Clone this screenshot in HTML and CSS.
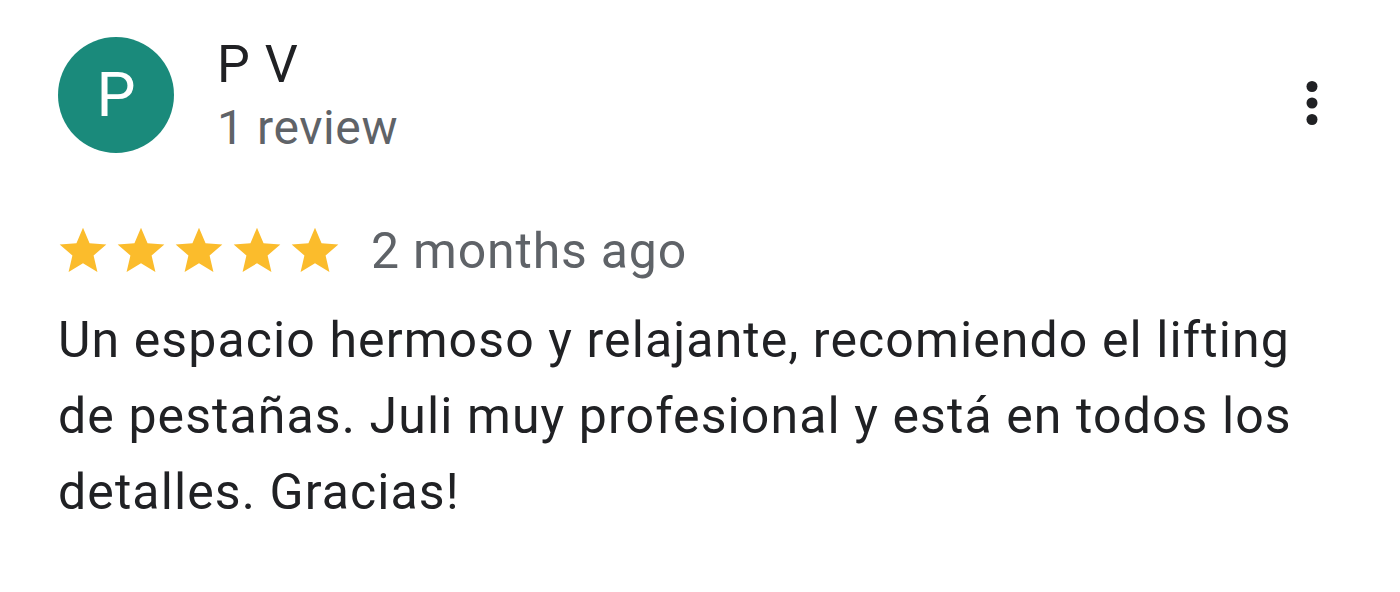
FILE: index.html
```html
<!DOCTYPE html>
<html lang="es">
<head>
<meta charset="utf-8">
<link rel="stylesheet" href="styles.css">
</head>
<body>
<div class="review">
  <div class="header">
    <div class="avatar">P</div>
    <div class="who">
      <div class="name">P V</div>
      <div class="count">1 review</div>
    </div>
    <svg class="more" viewBox="0 0 24 24" width="66" height="66"><circle cx="12" cy="6" r="2"/><circle cx="12" cy="12" r="2"/><circle cx="12" cy="18" r="2"/></svg>
  </div>
  <div class="meta">
    <div class="stars">
      <svg viewBox="0 0 24 24" width="56" height="56"><path d="M12 17.27L18.18 21l-1.64-7.03L22 9.24l-7.19-.61L12 2 9.19 8.63 2 9.240l5.46 4.73L5.82 21z"/></svg>
      <svg viewBox="0 0 24 24" width="56" height="56"><path d="M12 17.27L18.18 21l-1.64-7.03L22 9.24l-7.19-.61L12 2 9.19 8.63 2 9.24l5.46 4.73L5.82 21z"/></svg>
      <svg viewBox="0 0 24 24" width="56" height="56"><path d="M12 17.27L18.18 21l-1.64-7.03L22 9.24l-7.19-.61L12 2 9.19 8.63 2 9.24l5.46 4.73L5.82 21z"/></svg>
      <svg viewBox="0 0 24 24" width="56" height="56"><path d="M12 17.27L18.18 21l-1.64-7.03L22 9.24l-7.19-.61L12 2 9.19 8.63 2 9.24l5.46 4.73L5.82 21z"/></svg>
      <svg viewBox="0 0 24 24" width="56" height="56"><path d="M12 17.27L18.18 21l-1.64-7.03L22 9.24l-7.19-.61L12 2 9.19 8.63 2 9.24l5.46 4.73L5.82 21z"/></svg>
    </div>
    <div class="date">2 months ago</div>
  </div>
  <p class="text">Un espacio hermoso y relajante, recomiendo el lifting de pestañas. Juli muy profesional y está en todos los detalles. Gracias!</p>
</div>
</body>
</html>
```
FILE: styles.css
```css
html, body {
  margin: 0;
  padding: 0;
  background: #ffffff;
}
body {
  font-family: Roboto, "Liberation Sans", Arial, sans-serif;
  color: #202124;
}
.review {
  width: 1400px;
  height: 592px;
  box-sizing: border-box;
  padding: 37px 0 0 58px;
}
.header {
  display: flex;
  align-items: flex-start;
}
.avatar {
  width: 116px;
  height: 116px;
  border-radius: 50%;
  background: #1a8a7b;
  color: #ffffff;
  font-size: 62px;
  line-height: 116px;
  text-align: center;
}
.who {
  margin-left: 43px;
  margin-top: -3px;
  flex: 1;
}
.name {
  font-size: 52px;
  line-height: 62px;
  letter-spacing: 1px;
  color: #202124;
}
.count {
  font-size: 48px;
  line-height: 64px;
  letter-spacing: 0.6px;
  color: #5f6368;
}
.more {
  fill: #202124;
  margin-top: 33px;
  margin-right: 55px;
}
.meta {
  display: flex;
  align-items: center;
  margin-top: 63px;
  margin-left: -3px;
}
.stars {
  display: flex;
  gap: 2px;
}
.stars svg {
  fill: #fbbc2c;
  display: block;
}
.date {
  font-size: 50px;
  line-height: 56px;
  letter-spacing: 0.8px;
  color: #5f6368;
  margin-left: 28px;
}
.text {
  margin: 23px 0 0 0;
  width: 1300px;
  font-size: 50px;
  line-height: 76px;
  letter-spacing: 1.1px;
  color: #202124;
}
```
